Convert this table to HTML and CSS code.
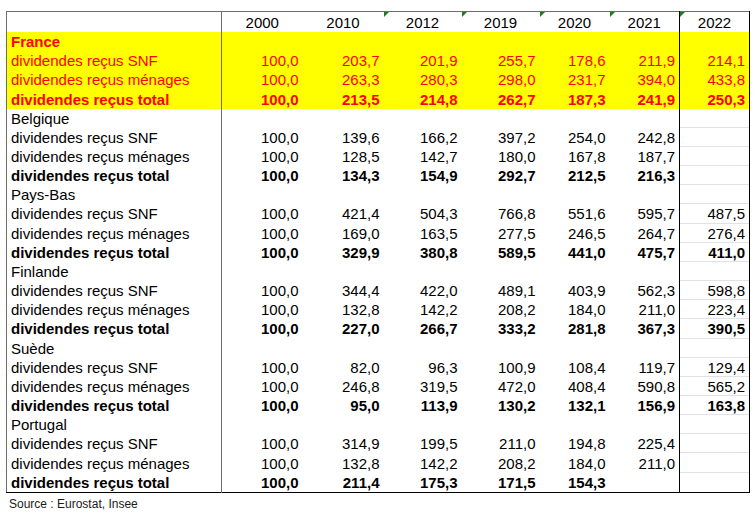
FILE: index.html
```html
<!DOCTYPE html>
<html lang="fr">
<head>
<meta charset="utf-8">
<title>Dividendes reçus</title>
<link rel="stylesheet" href="styles.css">
</head>
<body>
<div class="sheet">
<table class="data">
<colgroup>
<col class="c-label"><col class="c-81"><col class="c-81"><col class="c-78"><col class="c-78"><col class="c-70"><col class="c-70"><col class="c-70">
</colgroup>
<thead>
<tr class="head"><th class="label"></th><th>2000</th><th>2010</th><th class="flag">2012</th><th class="flag">2019</th><th class="flag">2020</th><th class="flag">2021</th><th class="flag y22">2022</th></tr>
</thead>
<tbody>
<tr class="hl bold"><td class="label">France</td><td></td><td></td><td></td><td></td><td></td><td></td><td class="y22"></td></tr>
<tr class="hl"><td class="label">dividendes reçus SNF</td><td>100,0</td><td>203,7</td><td>201,9</td><td>255,7</td><td>178,6</td><td>211,9</td><td class="y22">214,1</td></tr>
<tr class="hl"><td class="label">dividendes reçus ménages</td><td>100,0</td><td>263,3</td><td>280,3</td><td>298,0</td><td>231,7</td><td>394,0</td><td class="y22">433,8</td></tr>
<tr class="hl bold"><td class="label">dividendes reçus total</td><td>100,0</td><td>213,5</td><td>214,8</td><td>262,7</td><td>187,3</td><td>241,9</td><td class="y22">250,3</td></tr>

<tr><td class="label">Belgique</td><td></td><td></td><td></td><td></td><td></td><td></td><td class="y22 grid"></td></tr>
<tr><td class="label">dividendes reçus SNF</td><td>100,0</td><td>139,6</td><td>166,2</td><td>397,2</td><td>254,0</td><td>242,8</td><td class="y22 grid"></td></tr>
<tr><td class="label">dividendes reçus ménages</td><td>100,0</td><td>128,5</td><td>142,7</td><td>180,0</td><td>167,8</td><td>187,7</td><td class="y22 grid"></td></tr>
<tr class="bold"><td class="label">dividendes reçus total</td><td>100,0</td><td>134,3</td><td>154,9</td><td>292,7</td><td>212,5</td><td>216,3</td><td class="y22 grid"></td></tr>

<tr><td class="label">Pays-Bas</td><td></td><td></td><td></td><td></td><td></td><td></td><td class="y22 grid"></td></tr>
<tr><td class="label">dividendes reçus SNF</td><td>100,0</td><td>421,4</td><td>504,3</td><td>766,8</td><td>551,6</td><td>595,7</td><td class="y22 grid">487,5</td></tr>
<tr><td class="label">dividendes reçus ménages</td><td>100,0</td><td>169,0</td><td>163,5</td><td>277,5</td><td>246,5</td><td>264,7</td><td class="y22 grid">276,4</td></tr>
<tr class="bold"><td class="label">dividendes reçus total</td><td>100,0</td><td>329,9</td><td>380,8</td><td>589,5</td><td>441,0</td><td>475,7</td><td class="y22 grid">411,0</td></tr>

<tr><td class="label">Finlande</td><td></td><td></td><td></td><td></td><td></td><td></td><td class="y22 grid"></td></tr>
<tr><td class="label">dividendes reçus SNF</td><td>100,0</td><td>344,4</td><td>422,0</td><td>489,1</td><td>403,9</td><td>562,3</td><td class="y22 grid">598,8</td></tr>
<tr><td class="label">dividendes reçus ménages</td><td>100,0</td><td>132,8</td><td>142,2</td><td>208,2</td><td>184,0</td><td>211,0</td><td class="y22 grid">223,4</td></tr>
<tr class="bold"><td class="label">dividendes reçus total</td><td>100,0</td><td>227,0</td><td>266,7</td><td>333,2</td><td>281,8</td><td>367,3</td><td class="y22 grid">390,5</td></tr>

<tr><td class="label">Suède</td><td></td><td></td><td></td><td></td><td></td><td></td><td class="y22 grid"></td></tr>
<tr><td class="label">dividendes reçus SNF</td><td>100,0</td><td>82,0</td><td>96,3</td><td>100,9</td><td>108,4</td><td>119,7</td><td class="y22 grid">129,4</td></tr>
<tr><td class="label">dividendes reçus ménages</td><td>100,0</td><td>246,8</td><td>319,5</td><td>472,0</td><td>408,4</td><td>590,8</td><td class="y22 grid">565,2</td></tr>
<tr class="bold"><td class="label">dividendes reçus total</td><td>100,0</td><td>95,0</td><td>113,9</td><td>130,2</td><td>132,1</td><td>156,9</td><td class="y22 grid">163,8</td></tr>

<tr><td class="label">Portugal</td><td></td><td></td><td></td><td></td><td></td><td></td><td class="y22 grid"></td></tr>
<tr><td class="label">dividendes reçus SNF</td><td>100,0</td><td>314,9</td><td>199,5</td><td>211,0</td><td>194,8</td><td>225,4</td><td class="y22 grid"></td></tr>
<tr><td class="label">dividendes reçus ménages</td><td>100,0</td><td>132,8</td><td>142,2</td><td>208,2</td><td>184,0</td><td>211,0</td><td class="y22 grid"></td></tr>
<tr class="bold"><td class="label">dividendes reçus total</td><td>100,0</td><td>211,4</td><td>175,3</td><td>171,5</td><td>154,3</td><td></td><td class="y22"></td></tr>
</tbody>
</table>
<p class="source">Source : Eurostat, Insee</p>
</div>
</body>
</html>
```

FILE: styles.css
```css
html, body {
  margin: 0;
  padding: 0;
  background: #ffffff;
}

body {
  font-family: "Liberation Sans", Arial, sans-serif;
  color: #000000;
}

.sheet {
  padding: 11px 0 0 6px;
}

.data {
  border-collapse: collapse;
  table-layout: fixed;
  width: 743px;
  font-size: 15px;
  border-top: 1px solid #6e6e6e;
  border-left: 1px solid #6e6e6e;
  border-right: 1px solid #000000;
  border-bottom: 1px solid #000000;
}

.c-label { width: 215px; }
.c-81 { width: 81px; }
.c-78 { width: 78px; }
.c-70 { width: 70px; }

.data th,
.data td {
  padding: 0 4px 0 0;
  height: 19.17px;
  line-height: 17px;
  white-space: nowrap;
  text-align: right;
  vertical-align: middle;
  overflow: hidden;
}

.data .head th {
  height: 20px;
  font-weight: normal;
  text-align: center;
  padding: 0;
  position: relative;
  background: #ffffff;
}

.data .label {
  text-align: left;
  padding: 0 0 0 4px;
  border-right: 1px solid #6e6e6e;
}

.data .y22 {
  border-left: 1px solid #000000;
}

.data .grid {
  background: linear-gradient(to top, #dfe2e8 1px, transparent 1px);
}

.data .flag::before {
  content: "";
  position: absolute;
  top: 0;
  left: 0;
  width: 0;
  height: 0;
  border-top: 5px solid #1e7b1e;
  border-right: 5px solid transparent;
}

.hl td {
  background: #ffff00;
  color: #ff0000;
}

.bold td {
  font-weight: bold;
}

.source {
  margin: 4px 0 0 3px;
  font-size: 12px;
  line-height: 14px;
  color: #1a1a1a;
}
```
